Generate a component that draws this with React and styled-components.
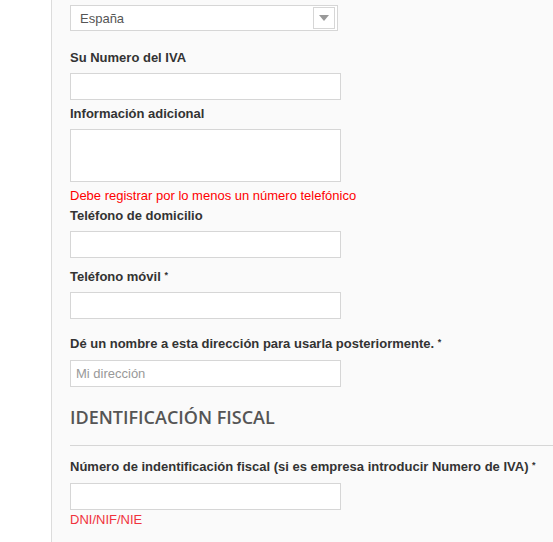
import React from 'react';
import styled, { createGlobalStyle } from 'styled-components';

const GlobalStyle = createGlobalStyle`
  html, body {
    margin: 0;
    padding: 0;
    background: #fff;
    font-family: Arial, "Liberation Sans", sans-serif;
  }
`;

const App = () => {
  return (
    <>
      <GlobalStyle />
      <Page>
        <Column>
          <Select>
            <SelectText>España</SelectText>
            <SelectArrow>
              <svg width="10" height="6" viewBox="0 0 10 6">
                <path d="M0 0 L10 0 L5 6 Z" fill="#999" />
              </svg>
            </SelectArrow>
          </Select>

          <Group $top={17}>
            <Label>Su Numero del IVA</Label>
            <Input />
          </Group>

          <Group $top={4}>
            <Label>Información adicional</Label>
            <TextArea />
          </Group>

          <ErrorText $top={5}>Debe registrar por lo menos un número telefónico</ErrorText>

          <Group $top={1}>
            <Label>Teléfono de domicilio</Label>
            <Input />
          </Group>

          <Group $top={9}>
            <Label>
              Teléfono móvil <Req>*</Req>
            </Label>
            <Input />
          </Group>

          <Group $top={15}>
            <Label>
              Dé un nombre a esta dirección para usarla posteriormente. <Req>*</Req>
            </Label>
            <Input placeholder="Mi dirección" $gap={8} />
          </Group>

          <Heading>IDENTIFICACIÓN FISCAL</Heading>
          <Rule />

          <Group $top={11}>
            <Label>
              Número de indentificación fiscal (si es empresa introducir Numero de IVA) <Req>*</Req>
            </Label>
            <Input $gap={8} />
          </Group>

          <ErrorText $top={1} $soft>DNI/NIF/NIE</ErrorText>
        </Column>
      </Page>
    </>
  );
};

export default App;

const Page = styled.div`
  height: 542px;
  overflow: hidden;
  padding-left: 51px;
`;

const Column = styled.div`
  height: 100%;
  background: #fafafa;
  border-left: 1px solid #dcdcdc;
  padding: 5px 0 0 18px;
`;

const Select = styled.div`
  width: 266px;
  height: 24px;
  border: 1px solid #d6d6d6;
  background: #fff;
  display: flex;
  align-items: center;
  justify-content: space-between;
`;

const SelectText = styled.span`
  padding-left: 9px;
  font-size: 13px;
  color: #555;
`;

const SelectArrow = styled.span`
  width: 20px;
  height: 20px;
  margin-right: 2px;
  border: 1px solid #d6d6d6;
  display: flex;
  align-items: center;
  justify-content: center;
`;

const Group = styled.div`
  margin-top: ${p => p.$top}px;
  display: flex;
  flex-direction: column;
  align-items: flex-start;
`;

const Label = styled.label`
  display: block;
  font-size: 13px;
  font-weight: bold;
  line-height: 18px;
  padding-top: 1px;
  margin-bottom: -1px;
  color: #333;
  white-space: nowrap;
`;

const Req = styled.sup`
  font-size: 9px;
  vertical-align: 3px;
  line-height: 0;
`;

const Input = styled.input`
  box-sizing: border-box;
  width: 271px;
  height: 27px;
  margin: ${p => p.$gap || 7}px 0 0;
  border: 1px solid #d6d6d6;
  background: #fff;
  padding: 0 5px;
  font-family: Arial, "Liberation Sans", sans-serif;
  font-size: 13px;
  outline: none;

  &::placeholder {
    color: #999;
  }
`;

const TextArea = styled.textarea`
  box-sizing: border-box;
  width: 271px;
  height: 53px;
  margin-top: 7px;
  border: 1px solid #d6d6d6;
  background: #fff;
  resize: none;
  outline: none;
`;

const ErrorText = styled.div`
  margin-top: ${p => p.$top}px;
  font-size: 13px;
  line-height: 18px;
  color: ${p => (p.$soft ? '#f0323c' : '#f00')};
`;

const Heading = styled.h3`
  margin: 18px 0 0;
  font-family: "Open Sans", sans-serif;
  font-weight: 600;
  font-size: 18px;
  line-height: 24px;
  color: #555;
`;

const Rule = styled.div`
  margin-top: 16px;
  height: 1px;
  background: #d6d6d6;
`;
